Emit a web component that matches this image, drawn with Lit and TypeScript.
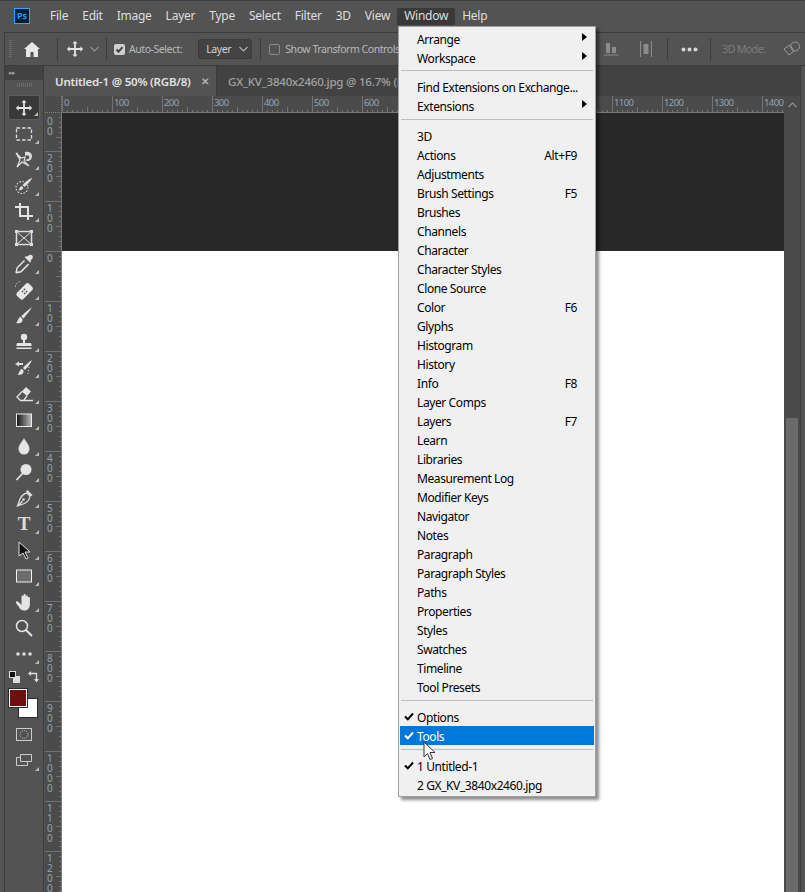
import { LitElement, html, css, svg } from 'lit'
import { customElement } from 'lit/decorators.js'

type Row = { label?: string; key?: string; sub?: boolean; check?: boolean; hot?: boolean; sep?: boolean; tight?: boolean }

const panelNames = ['3D', 'Actions', 'Adjustments', 'Brush Settings', 'Brushes', 'Channels', 'Character', 'Character Styles', 'Clone Source', 'Color', 'Glyphs', 'Histogram', 'History', 'Info', 'Layer Comps', 'Layers', 'Learn', 'Libraries', 'Measurement Log', 'Modifier Keys', 'Navigator', 'Notes', 'Paragraph', 'Paragraph Styles', 'Paths', 'Properties', 'Styles', 'Swatches', 'Timeline', 'Tool Presets']
const panelKeys: Record<string, string> = { Actions: 'Alt+F9', 'Brush Settings': 'F5', Color: 'F6', Info: 'F8', Layers: 'F7' }

const rows: Row[] = [
  { label: 'Arrange', sub: true },
  { label: 'Workspace', sub: true },
  { sep: true, tight: true },
  { label: 'Find Extensions on Exchange...' },
  { label: 'Extensions', sub: true },
  { sep: true },
  ...panelNames.map((label) => ({ label, key: panelKeys[label] })),
  { sep: true },
  { label: 'Options', check: true },
  { label: 'Tools', check: true, hot: true },
  { sep: true },
  { label: '1 Untitled-1', check: true },
  { label: '2 GX_KV_3840x2460.jpg' },
]

const menus = ['File', 'Edit', 'Image', 'Layer', 'Type', 'Select', 'Filter', '3D', 'View', 'Window', 'Help']

const moveIcon = svg`<path fill="#e4e4e4" d="M10 1l3 3h-2v5h5V7l3 3-3 3v-2h-5v5h2l-3 3-3-3h2v-5H4v2l-3-3 3-3v2h5V4H7z"/>`

const toolIcons: { icon?: unknown; text?: string; on?: boolean; corner: boolean }[] = [
  { icon: svg`<g transform="translate(1 1) scale(.9)">${moveIcon}</g>`, on: true, corner: true },
  { icon: svg`<rect x="2.5" y="4" width="15" height="12" fill="none" stroke="#ddd" stroke-width="1.3" stroke-dasharray="3.5 2"/>`, corner: true },
  { icon: svg`<path fill="#ddd" d="M11 2c4-1 7 1 7 4 0 3-2 5-5 5l-2-1 3-1c1 0 2-2 1-3-1-1-3-1-4 0z"/><path fill="none" stroke="#ddd" stroke-width="1.2" d="M2 3l5 5 4-1-1 4 5 5-7-4-5 5 3-7zM3 3l3 6"/>`, corner: true },
  { icon: svg`<circle cx="8" cy="11.5" r="6" fill="none" stroke="#ddd" stroke-width="1.2" stroke-dasharray="1.5 1.6"/><path fill="#ddd" d="M18.500 1.500c-2 4-5 7-8 9.500l-2-2c3-3 6-6 10-7.500zM7.500 10c-2 .5-1.500 3-3 4 3 .8 5-1 4.800-2.500z"/>`, corner: true },
  { icon: svg`<path fill="none" stroke="#e4e4e4" stroke-width="2" d="M6 1v13h13M1 5h13v13"/>`, corner: true },
  { icon: svg`<rect x="2.5" y="3.5" width="15" height="13" fill="none" stroke="#ddd" stroke-width="1.5"/><path stroke="#ddd" d="M3 4l14 12M17 4L3 16"/><path fill="#ddd" d="M1 2h3v3H1zM16 2h3v3h-3zM1 15h3v3H1zM16 15h3v3h-3z"/>`, corner: false },
  { icon: svg`<path fill="#e4e4e4" d="M14.500 1.500c1-1 3-1 3.800 0s.7 2.500-.3 3.500l-1.500 1.500.8.800-1.300 1.300-5.300-5.300 1.300-1.300.8.800z"/><path fill="none" stroke="#e4e4e4" stroke-width="1.500" d="M10.500 6.500l-7 7c-1 1-1 2-.8 3.300l-.7 1.200 1 .8 1.200-.7c1.300.2 2.300 0 3.300-1l7-7"/>`, corner: true },
  { icon: svg`<g transform="rotate(45 11 11)"><rect x="6.500" y="3" width="9" height="17" rx="2.500" fill="#e8e8e8"/><g fill="#555"><circle cx="9.500" cy="10.300" r=".9"/><circle cx="12.500" cy="10.300" r=".9"/><circle cx="9.500" cy="13" r=".9"/><circle cx="12.500" cy="13" r=".9"/></g></g><path fill="none" stroke="#ddd" stroke-dasharray="1.500 1.500" d="M1.500 7A5.500 5.500 0 0 1 7 1.500"/>`, corner: true },
  { icon: svg`<path fill="#e4e4e4" d="M18 1c-2 4-6 8-8.500 11.500L7.200 10.200C10.500 7 14 4 18 1zM6.500 11c-2.500.5-2 4-4.500 6 4 1.200 7-.8 6.500-4z"/>`, corner: true },
  { icon: svg`<circle cx="10" cy="5" r="3.200" fill="#e4e4e4"/><path fill="#e4e4e4" d="M9 7h2v4h5c1 0 1.500.6 1.500 1.500V14h-15v-1.500C2.500 11.600 3 11 4 11h5zM2.500 15.500h15V17h-15z"/>`, corner: true },
  { icon: svg`<path fill="#e4e4e4" d="M18 2c-1.500 4-4.500 7-7 10L9 10c2.500-3 5.500-6 9-8zM8 11c-2.500.4-2 3.500-4.500 5.500 3.500 1 6.500-.6 6-4z"/><path fill="#ddd" d="M1 6l4-2.500V5h4v2H5v1.500z"/><path stroke="#ddd" stroke-dasharray="1 2" d="M15 9l-1 7"/>`, corner: true },
  { icon: svg`<path fill="#e4e4e4" d="M12 3l5 4.500-4 4.500-5.200-4.600z"/><path fill="none" stroke="#e4e4e4" stroke-width="1.300" d="M8 7.500L3 13l3.500 3.500h3L13 12M6 16.500h13"/>`, corner: true },
  { icon: svg`<defs><linearGradient id="gr"><stop offset="0" stop-color="#111"/><stop offset="1" stop-color="#bbb"/></linearGradient></defs><rect x="2.500" y="4" width="15" height="12.500" fill="url(#gr)" stroke="#eee"/>`, corner: true },
  { icon: svg`<path fill="#e4e4e4" d="M10 2c1 3 5.500 6.500 5.500 11a5.500 5.500 0 0 1-11 0C4.500 8.500 9 5 10 2z"/>`, corner: true },
  { icon: svg`<circle cx="12" cy="7.500" r="5.500" fill="#e4e4e4"/><path stroke="#e4e4e4" stroke-width="1.800" d="M8.500 11.500L2.500 18"/>`, corner: true },
  { icon: svg`<path fill="none" stroke="#ddd" stroke-width="1.300" d="M13 5l3 3c-.5 3-2.500 6-5.500 7.500l-7 2.500 2.500-7C7.500 8 10 5.500 13 5zM4 18l4.500-5"/><path fill="#ddd" d="M13.500 2l5 5-1.500 1.500-5-5z"/><circle cx="9.500" cy="11.500" r="1.300" fill="#ddd"/>`, corner: true },
  { text: 'T', corner: true },
  { icon: svg`<path fill="#111" stroke="#ddd" d="M5 2l11 10h-5l3 6-2 1-3-6-4 3z"/>`, corner: true },
  { icon: svg`<rect x="2.500" y="4" width="15" height="12" fill="#6c6c6c" stroke="#eee"/>`, corner: true },
  { icon: svg`<path fill="#e4e4e4" d="M4.500 10l3 3V4.500c0-1.500 2-1.500 2 0V3c0-1.500 2.200-1.500 2.200 0v1.500c0-1.500 2.200-1.500 2.200 0V6c0-1.300 2-1.300 2 0v6c0 4-2 6.500-5.500 6.500-3 0-4.400-1.500-5.400-3.500L2 11c-.8-1.500 1.200-2.500 2.500-1z"/>`, corner: true },
  { icon: svg`<circle cx="8" cy="8" r="5.500" fill="none" stroke="#e4e4e4" stroke-width="1.500"/><path stroke="#e4e4e4" stroke-width="2" d="M12 12l6 6"/>`, corner: false },
  { icon: svg`<g fill="#ddd"><circle cx="4" cy="10" r="1.800"/><circle cx="10" cy="10" r="1.800"/><circle cx="16" cy="10" r="1.800"/></g>`, corner: true },
]

@customElement('app-root')
export class AppRoot extends LitElement {
  static styles = css`
    :host {
      display: block;
      height: 892px;
      overflow: hidden;
      position: relative;
      background: #535353;
      font-family: 'Noto Sans', sans-serif;
      font-size: 12px;
      color: #dcdcdc;
    }
    svg { display: block; flex: none; }

    .menubar {
      display: flex;
      align-items: center;
      height: 32px;
      box-sizing: border-box;
      border-top: 1px solid #3e3e3e;
      padding-left: 14px;
    }
    .logo {
      width: 16px;
      height: 16px;
      box-sizing: border-box;
      border: 1px solid #31a8ff;
      background: #001e36;
      color: #31a8ff;
      font-size: 9px;
      font-weight: 600;
      line-height: 14px;
      text-align: center;
      margin: 0 13px 2px 0;
    }
    .menu-name { padding: 0 7px; height: 17px; line-height: 16px; color: #dedede; letter-spacing: -0.25px; }
    .menu-name.open { background: #393939; border-radius: 2px 2px 0 0; }

    .options {
      display: flex;
      align-items: center;
      height: 34px;
      margin-left: 4px;
      box-sizing: border-box;
      border-top: 1px solid #3c3c3c;
      border-bottom: 1px solid #3c3c3c;
      border-left: 1px solid #3c3c3c;
      color: #b9b9b9;
      letter-spacing: -0.45px;
      font-size: 10.5px;
    }
    .grip { width: 3px; height: 18px; margin-left: 4px; background: repeating-linear-gradient(#6a6a6a 0 1px, transparent 1px 2px); }
    .divider { width: 1px; height: 22px; background: #3c3c3c; flex: none; }
    .check { width: 11px; height: 11px; box-sizing: border-box; border-radius: 2px; flex: none; }
    .check.on { background: #cfcfcf; color: #444; }
    .check.off { border: 1px solid #8a8a8a; }
    .select {
      display: flex;
      align-items: center;
      justify-content: space-between;
      box-sizing: border-box;
      width: 54px;
      height: 20px;
      padding: 0 3px 0 7px;
      background: #434343;
      border: 1px solid #3a3a3a;
      border-radius: 3px;
      color: #d4d4d4;
    }
    .opts-right { display: flex; align-items: center; margin-left: auto; padding-right: 4px; }
    .mode { color: #7d7d7d; margin: 0 18px 0 11px; letter-spacing: -0.6px; }

    .main { display: flex; height: 826px; }
    .toolbar {
      width: 40px;
      box-sizing: border-box;
      flex: none;
      margin-left: 4px;
      border-left: 1px solid #3c3c3c;
      border-right: 1px solid #3c3c3c;
      display: flex;
      flex-direction: column;
      align-items: center;
    }
    .collapse { width: 100%; height: 14px; background: #424242; color: #9c9c9c; font-size: 7px; line-height: 13px; padding-left: 4px; box-sizing: border-box; letter-spacing: -1px; }
    .toolgrip { width: 15px; height: 4px; margin: 3px 0 8px; background: repeating-linear-gradient(90deg, #6c6c6c 0 1px, transparent 1px 2px); }
    .tool { position: relative; width: 32px; height: 26px; display: flex; align-items: center; justify-content: center; box-sizing: border-box; flex: none; }
    .tool.on { background: #393939; border: 1px solid #5e5e5e; border-radius: 3px; height: 25px; margin: 0 0 1px; }
    .tool.corner::after {
      content: '';
      position: absolute;
      right: 1px;
      bottom: 3px;
      border-left: 4px solid transparent;
      border-bottom: 4px solid #bdbdbd;
    }
    .tool-t { font-family: 'Liberation Serif', serif; font-size: 19px; font-weight: 700; color: #dcdcdc; line-height: 26px; }
    .swap { display: flex; width: 30px; height: 14px; margin-top: 3px; justify-content: space-between; align-items: center; }
    .swatches { position: relative; width: 30px; height: 30px; margin: 4px 2px 4px 0; }
    .swatch { position: absolute; width: 20px; height: 20px; box-sizing: border-box; border: 1px solid #2b2b2b; }
    .swatch.bg { left: 10px; top: 10px; background: #fff; }
    .swatch.fg { left: 0; top: 0; background: #6e1010; box-shadow: inset 0 0 0 1px #fff; }

    .work { flex: none; width: 755px; margin-left: 1px; display: flex; flex-direction: column; }
    .tabs { display: flex; height: 30px; flex: none; background: #424242; }
    .tab { display: flex; align-items: center; padding-left: 11px; color: #a2a2a2; white-space: nowrap; font-weight: 500; font-size: 11.5px; letter-spacing: -0.2px; overflow: hidden; }
    .tab.on { width: 172px; padding-left: 10px; box-sizing: border-box; flex: none; background: #535353; color: #e2e2e2; font-weight: 600; border-right: 1px solid #3c3c3c; }
    .tab .x { margin-left: 10px; color: #b4b4b4; font-size: 10px; font-weight: 700; }

    .ruler-top { display: flex; height: 17px; flex: none; background: #4b4b4b; box-sizing: border-box; }
    .corner-box { width: 17px; flex: none; box-sizing: border-box; border-bottom: 1px dotted #888; border-right: 1px dotted #888; }
    .ticks { display: flex; width: 722px; flex: none; overflow: hidden; border-bottom: 1px solid #7a7a7a; box-sizing: border-box; }
    .scroll-up { flex: 1; display: flex; justify-content: center; align-items: center; background: #4a4a4a; }
    .cell {
      width: 50px;
      flex: none;
      box-sizing: border-box;
      border-left: 1px solid #737373;
      padding: 0 0 0 1px;
      font-size: 9.5px;
      line-height: 13px;
      letter-spacing: -0.6px;
      color: #93a3b5;
      background:
        linear-gradient(#737373, #737373) 24px 100% / 1px 5px no-repeat,
        repeating-linear-gradient(90deg, #737373 0 1px, transparent 1px 5px) 4px 100% / 100% 2px no-repeat;
    }
    .mid { flex: 1; min-height: 0; display: flex; }
    .ruler-left { width: 17px; flex: none; background: #4b4b4b; border-right: 1px solid #7a7a7a; box-sizing: border-box; overflow: hidden; }
    .vcell {
      height: 50px;
      box-sizing: border-box;
      border-top: 1px solid #737373;
      padding: 1px 0 0 2px;
      font-size: 10px;
      line-height: 10px;
      color: #93a3b5;
      background:
        linear-gradient(#737373, #737373) 100% 24px / 5px 1px no-repeat,
        repeating-linear-gradient(#737373 0 1px, transparent 1px 5px) 100% 4px / 2px 100% no-repeat;
    }
    .vcell.first { height: 38px; border-top: 0; padding-top: 3px; }
    .vcell div { height: 10px; }
    .canvas-wrap { width: 722px; flex: none; display: flex; flex-direction: column; }
    .pasteboard { height: 138px; flex: none; background: #282828; }
    .page { flex: 1; background: #fff; }
    .vscroll { flex: 1; background: #4a4a4a; display: flex; flex-direction: column; align-items: center; }
    .thumb { width: 12px; flex: 1; margin-top: 305px; background: #6b6b6b; border-radius: 1px 1px 0 0; }
    .edge { flex: 1; border-left: 1px solid #3c3c3c; }

    .dropdown {
      position: absolute;
      left: 398px;
      top: 26px;
      width: 198px;
      box-sizing: border-box;
      padding: 2px 1px 2px;
      background: #f0f0f0;
      border: 1px solid #a0a0a0;
      box-shadow: 3px 3px 3px rgba(0, 0, 0, 0.45);
      color: #000;
      font-size: 12px;
      letter-spacing: -0.4px;
    }
    .row { display: flex; align-items: center; box-sizing: border-box; height: 19px; padding: 1px 17px 0; position: relative; white-space: nowrap; }
    .row .key { margin-left: auto; }
    .row.hot { background: #0078d7; color: #fff; }
    .row .tick { position: absolute; left: 4px; top: 5px; }
    .row .arrow {
      position: absolute;
      right: 7px;
      top: 4px;
      border-left: 5px solid #000;
      border-top: 4px solid transparent;
      border-bottom: 4px solid transparent;
    }
    .sep { height: 1px; background: #bdbdbd; margin: 4px 1px 6px; }
    .sep.tight { margin: 3px 1px 6px; }
    .pointer { position: absolute; left: 423px; top: 741px; }
  `

  private menuRow(r: Row) {
    if (r.sep) return html`<div class="sep ${r.tight ? 'tight' : ''}"></div>`
    return html`<div class="row ${r.hot ? 'hot' : ''}">
      ${r.check
        ? html`<svg class="tick" width="10" height="9" viewBox="0 0 10 9"><path fill="none" stroke="${r.hot ? '#fff' : '#000'}" stroke-width="2" d="M1 4.500l2.800 2.800L9 1.500"/></svg>`
        : ''}
      <span>${r.label}</span>
      ${r.key ? html`<span class="key">${r.key}</span>` : ''}
      ${r.sub ? html`<span class="arrow"></span>` : ''}
    </div>`
  }

  private optionsBar() {
    return html`<div class="options">
      <div class="grip"></div>
      <svg style="margin-left:12px" width="16" height="15" viewBox="0 0 16 15"><path fill="#e6e6e6" d="M8 0L0 7h2v8h4.500v-5h3v5H14V7h2z"/></svg>
      <div class="divider" style="margin-left:17px"></div>
      <svg style="margin-left:8px" width="18" height="18" viewBox="0 0 20 20">${moveIcon}</svg>
      <svg style="margin-left:6px" width="9" height="6" viewBox="0 0 9 6"><path fill="none" stroke="#8f8f8f" stroke-width="1.200" d="M.5 1l4 4 4-4"/></svg>
      <div class="divider" style="margin-left:7px"></div>
      <div class="check on" style="margin-left:7px">
        <svg width="11" height="11" viewBox="0 0 11 11"><path fill="none" stroke="#444" stroke-width="2" d="M2.500 5.500l2 2.200 4-4.500"/></svg>
      </div>
      <span style="margin-left:4px">Auto-Select:</span>
      <div class="select" style="margin-left:16px">
        <span>Layer</span>
        <svg width="9" height="6" viewBox="0 0 9 6"><path fill="none" stroke="#b0b0b0" stroke-width="1.200" d="M.5 1l4 4 4-4"/></svg>
      </div>
      <div class="divider" style="margin-left:8px"></div>
      <div class="check off" style="margin-left:8px"></div>
      <span style="margin-left:5px;white-space:nowrap">Show Transform Controls</span>
      <div class="opts-right">
        <svg width="15" height="14" viewBox="0 0 15 14"><path fill="#8c8c8c" d="M2 1h4v10H2zM8 5h4v6H8zM0 12.500h14.500v1H0z"/></svg>
        <svg style="margin-left:21px" width="12" height="16" viewBox="0 0 12 16"><path fill="#8c8c8c" d="M0 0h1v16H0zM11 0h1v16h-1zM3.500 3h5v10h-5z"/></svg>
        <div class="divider" style="margin-left:15px"></div>
        <svg style="margin-left:13px" width="17" height="5" viewBox="0 0 17 5"><g fill="#d6d6d6"><circle cx="2.500" cy="2.500" r="2"/><circle cx="8.500" cy="2.500" r="2"/><circle cx="14.500" cy="2.500" r="2"/></g></svg>
        <div class="divider" style="margin-left:12px"></div>
        <span class="mode">3D Mode:</span>
        <svg width="18" height="16" viewBox="0 0 18 16"><circle cx="12" cy="5.500" r="4.500" fill="none" stroke="#9a9a9a"/><path fill="none" stroke="#9a9a9a" d="M1 8l6-4 4 6-5 4z"/></svg>
      </div>
    </div>`
  }

  private toolBar() {
    return html`<div class="toolbar">
      <div class="collapse">▸▸</div>
      <div class="toolgrip"></div>
      ${toolIcons.map(
        (t) => html`<div class="tool ${t.on ? 'on' : ''} ${t.corner ? 'corner' : ''}">
          ${t.text
            ? html`<span class="tool-t">${t.text}</span>`
            : html`<svg width="20" height="20" viewBox="0 0 20 20">${t.icon}</svg>`}
        </div>`,
      )}
      <div class="swap">
        <svg width="11" height="12" viewBox="0 0 11 12"><rect x="4" y="5" width="7" height="7" fill="#ddd"/><rect x=".5" y=".5" width="6" height="6" fill="#111" stroke="#ddd"/></svg>
        <svg width="11" height="12" viewBox="0 0 11 12"><path fill="none" stroke="#ddd" stroke-width="1.300" d="M2 2.500h6.500V9"/><path fill="#ddd" d="M3 0v5L0 2.500zM6 8h5l-2.500 3.500z"/></svg>
      </div>
      <div class="swatches">
        <div class="swatch bg"></div>
        <div class="swatch fg"></div>
      </div>
      <div class="tool">
        <svg width="20" height="20" viewBox="0 0 20 20"><rect x="2.500" y="3.500" width="15" height="12" fill="none" stroke="#ccc"/><circle cx="10" cy="9.500" r="4" fill="none" stroke="#ccc" stroke-dasharray="1 1.300"/></svg>
      </div>
      <div class="tool corner">
        <svg width="20" height="20" viewBox="0 0 20 20"><path fill="none" stroke="#ccc" d="M6.500 6.500h-4v8h11v-4M6.500 3.500h11v7h-11z"/></svg>
      </div>
    </div>`
  }

  private rulers() {
    const tops = Array.from({ length: 15 }, (_, i) => String(i * 100))
    const lefts = ['200', '100', '0', ...Array.from({ length: 12 }, (_, i) => String((i + 1) * 100))]
    return {
      top: html`<div class="ruler-top">
        <div class="corner-box"></div>
        <div class="ticks">${tops.map((n) => html`<div class="cell">${n}</div>`)}</div>
        <div class="scroll-up">
          <svg width="9" height="6" viewBox="0 0 9 6"><path fill="none" stroke="#8f8f8f" stroke-width="1.200" d="M.5 5l4-4 4 4"/></svg>
        </div>
      </div>`,
      left: html`<div class="ruler-left">
        <div class="vcell first"><div>0</div><div>0</div></div>
        ${lefts.map((n) => html`<div class="vcell">${n.split('').map((d) => html`<div>${d}</div>`)}</div>`)}
      </div>`,
    }
  }

  render() {
    const r = this.rulers()
    return html`
      <div class="menubar">
        <div class="logo">Ps</div>
        ${menus.map((m) => html`<div class="menu-name ${m === 'Window' ? 'open' : ''}">${m}</div>`)}
      </div>
      ${this.optionsBar()}
      <div class="main">
        ${this.toolBar()}
        <div class="work">
          <div class="tabs">
            <div class="tab on">Untitled-1 @ 50% (RGB/8)<span class="x">✕</span></div>
            <div class="tab">GX_KV_3840x2460.jpg @ 16.7% (RGB/8)</div>
          </div>
          ${r.top}
          <div class="mid">
            ${r.left}
            <div class="canvas-wrap">
              <div class="pasteboard"></div>
              <div class="page"></div>
            </div>
            <div class="vscroll"><div class="thumb"></div></div>
          </div>
        </div>
        <div class="edge"></div>
      </div>
      <div class="dropdown">${rows.map((x) => this.menuRow(x))}</div>
      <svg class="pointer" width="14" height="20" viewBox="0 0 14 20"><path fill="#fff" stroke="#333" d="M1 1v15l3.500-3.500 2.500 6 2.500-1-2.500-6H12z"/></svg>
    `
  }
}
